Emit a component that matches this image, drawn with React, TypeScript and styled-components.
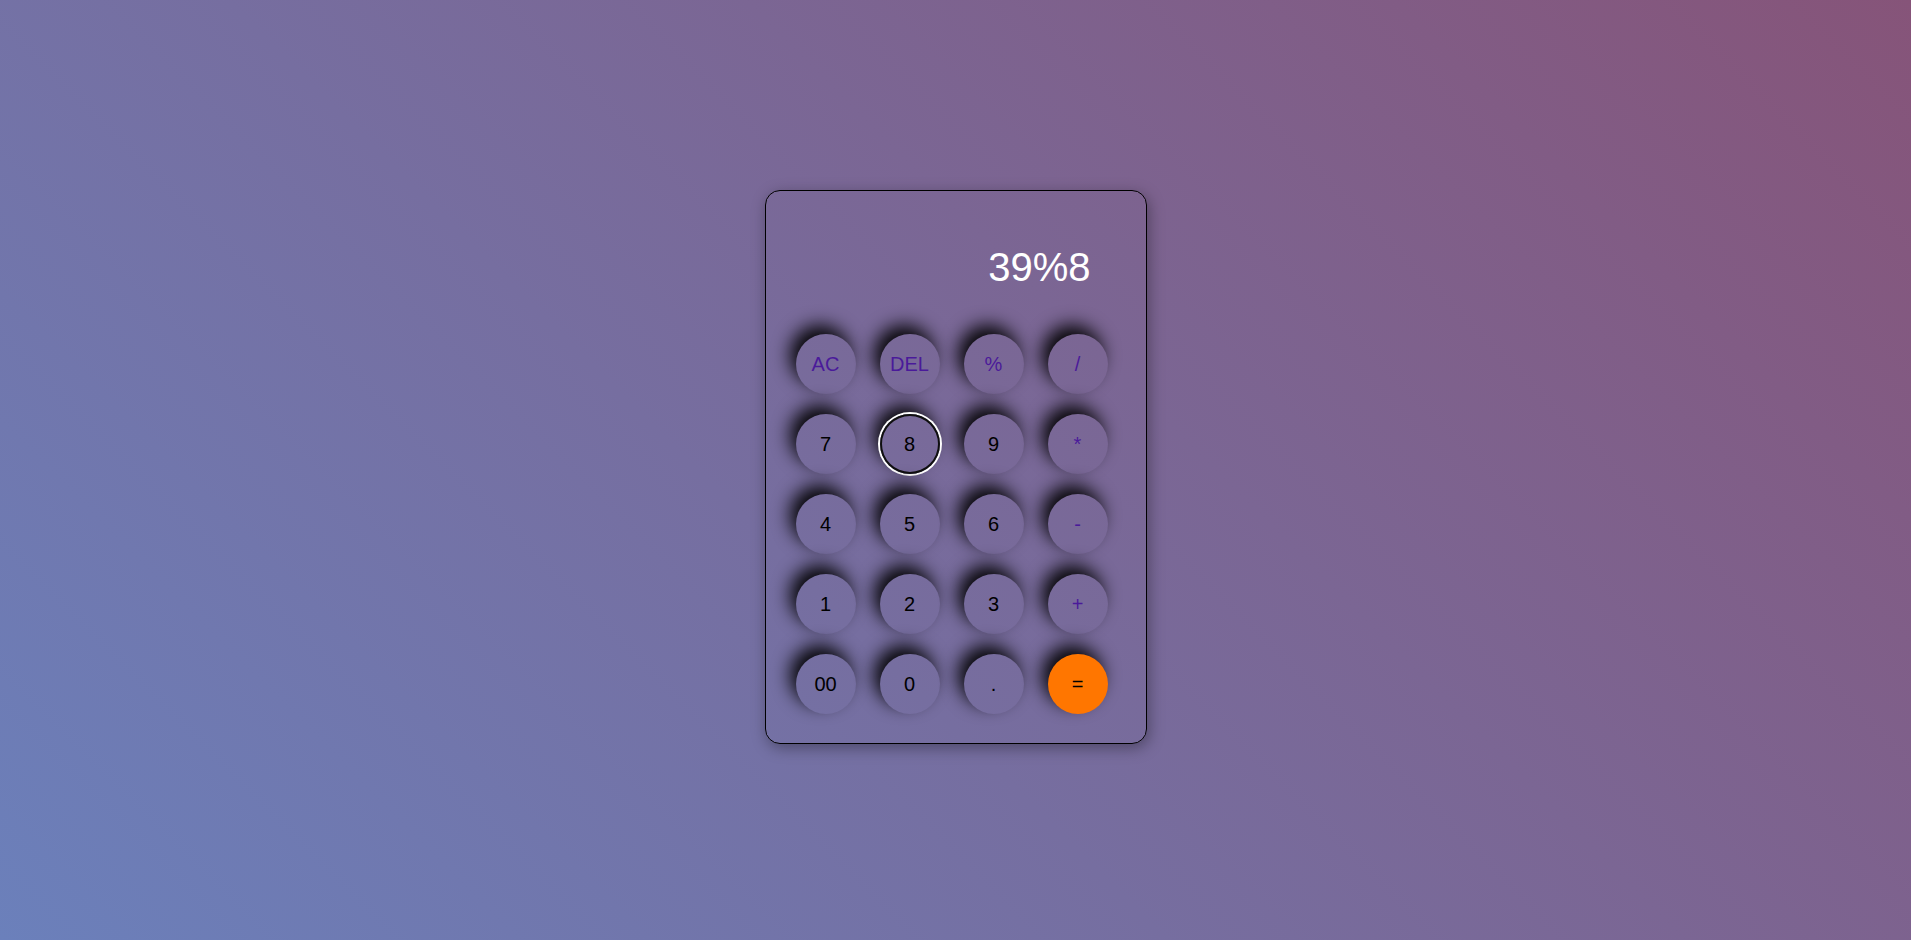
import React from "react";
import styled, { createGlobalStyle } from "styled-components";

const GlobalStyle = createGlobalStyle`
  * { box-sizing: border-box; }
  html, body { margin: 0; padding: 0; }
  body {
    font-family: "Liberation Sans", Arial, sans-serif;
    background: linear-gradient(45deg, #6b80bb, #865479);
    min-height: 100vh;
  }
`;

const Page = styled.main`
  min-height: 100vh;
  display: flex;
  align-items: center;
  justify-content: center;
`;

const Calculator = styled.div`
  width: 382px;
  border: 1px solid #000;
  border-radius: 15px;
  padding: 53px 38px 29px 30px;
  box-shadow: 2px 4px 15px rgba(0, 0, 0, 0.35);
  display: flex;
  flex-direction: column;
  margin-top: -6px;
`;

const Display = styled.div`
  height: 46px;
  padding-right: 17px;
  text-align: right;
  color: #fff;
  font-size: 40px;
  line-height: 46px;
  margin-bottom: 44px;
`;

const Keys = styled.div`
  display: grid;
  grid-template-columns: repeat(4, 60px);
  column-gap: 24px;
  row-gap: 20px;
`;

type Kind = "num" | "op" | "eq";

const dropShadow = "-6px -9px 18px rgba(0,0,0,0.95)";

const Key = styled.button<{ $kind: Kind; $focused?: boolean }>`
  width: 60px;
  height: 60px;
  border-radius: 50%;
  border: none;
  padding: 0;
  font-family: "Liberation Sans", Arial, sans-serif;
  font-size: 20px;
  cursor: pointer;
  outline: none;
  background: ${(p) => (p.$kind === "eq" ? "#ff7600" : "transparent")};
  color: ${(p) => (p.$kind === "op" ? "#4a1a9a" : "#000")};
  box-shadow: ${(p) =>
    p.$focused
      ? `inset 0 0 0 2px #101010, 0 0 0 2px #fff, ${dropShadow}`
      : dropShadow};
`;

const keys: { label: string; kind: Kind }[] = [
  { label: "AC", kind: "op" },
  { label: "DEL", kind: "op" },
  { label: "%", kind: "op" },
  { label: "/", kind: "op" },
  { label: "7", kind: "num" },
  { label: "8", kind: "num" },
  { label: "9", kind: "num" },
  { label: "*", kind: "op" },
  { label: "4", kind: "num" },
  { label: "5", kind: "num" },
  { label: "6", kind: "num" },
  { label: "-", kind: "op" },
  { label: "1", kind: "num" },
  { label: "2", kind: "num" },
  { label: "3", kind: "num" },
  { label: "+", kind: "op" },
  { label: "00", kind: "num" },
  { label: "0", kind: "num" },
  { label: ".", kind: "num" },
  { label: "=", kind: "eq" },
];

export default function App() {
  return (
    <>
      <GlobalStyle />
      <Page>
        <Calculator>
          <Display>39%8</Display>
          <Keys>
            {keys.map((k) => (
              <Key key={k.label} $kind={k.kind} $focused={k.label === "8"}>
                {k.label}
              </Key>
            ))}
          </Keys>
        </Calculator>
      </Page>
    </>
  );
}
